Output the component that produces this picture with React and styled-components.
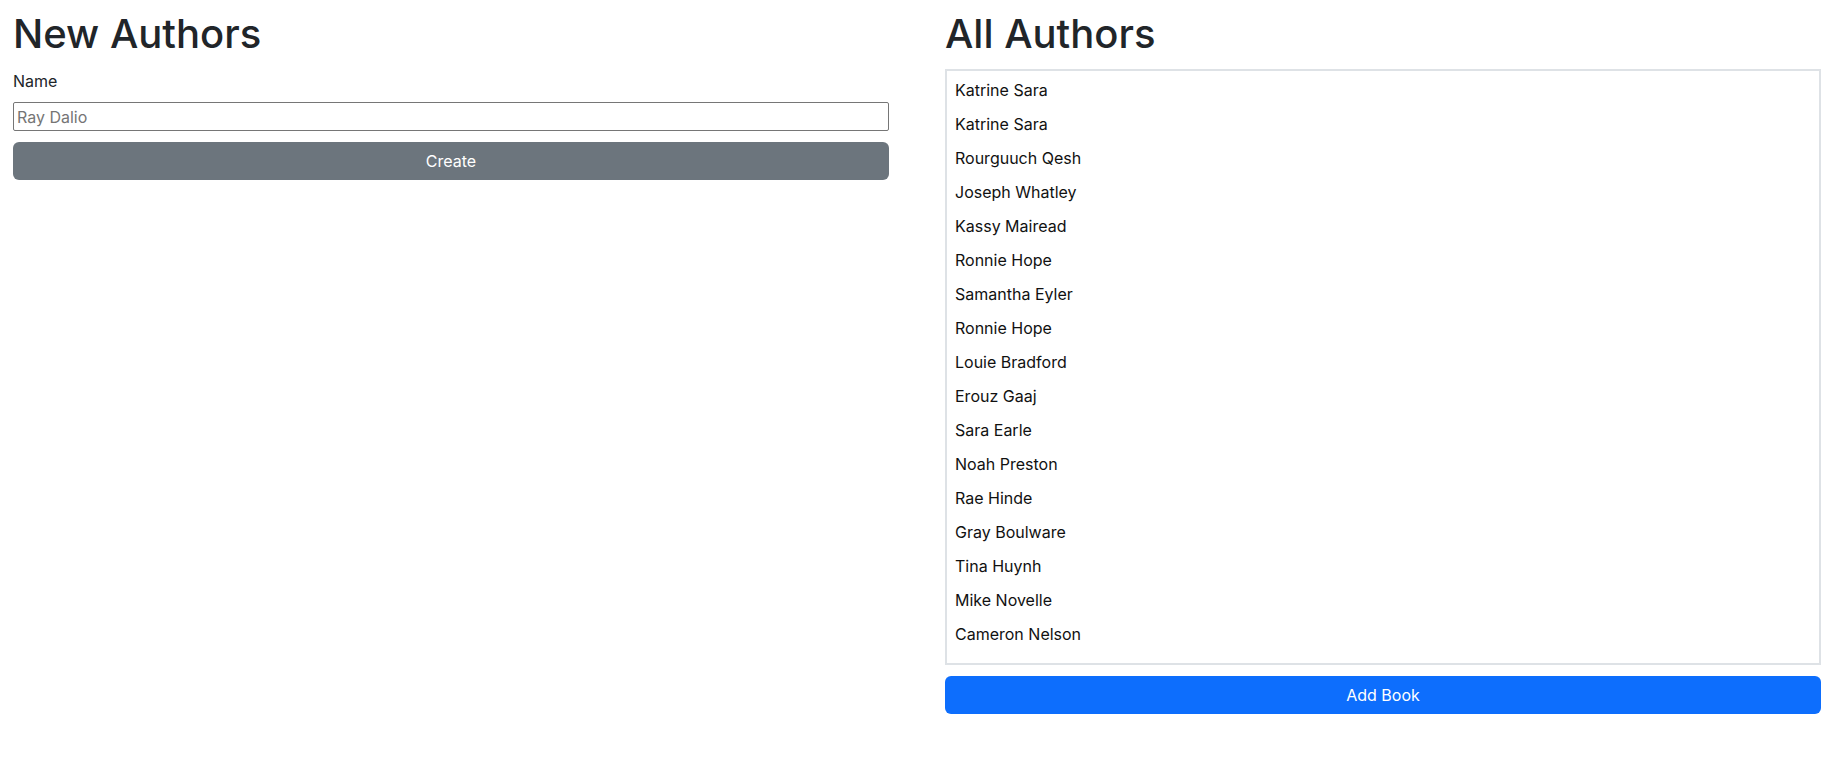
import React from 'react';
import styled, { createGlobalStyle } from 'styled-components';


const GlobalStyle = createGlobalStyle`
	html, body {
		margin: 0;
		padding: 0;
		background: #fff;
	}
	body {
		font-family: Inter, "Liberation Sans", sans-serif;
		font-size: 16px;
		line-height: 1.5;
		color: #212529;
	}
`;

const Page = styled.div`
	display: flex;
	gap: 56px;
	padding: 10px 20px 0 13px;
`;

const Column = styled.section`
	flex: 1;
	min-width: 0;
	display: flex;
	flex-direction: column;
`;

const Title = styled.h1`
	margin: 0 0 11px;
	font-size: 40px;
	font-weight: 500;
	line-height: 48px;
	color: #212529;
`;

const Label = styled.label`
	display: block;
	font-size: 16px;
	line-height: 24px;
	margin-bottom: 9px;
`;

const TextInput = styled.input`
	box-sizing: border-box;
	width: 100%;
	height: 29px;
	margin: 0;
	padding: 1px 3px;
	border: 1px solid #767676;
	border-radius: 2px;
	font-family: Inter, "Liberation Sans", sans-serif;
	font-size: 16px;
	color: #212529;
	outline: none;

	&::placeholder {
		color: #757575;
	}
`;

const Button = styled.button`
	box-sizing: border-box;
	width: 100%;
	height: 38px;
	margin-top: 11px;
	border: none;
	border-radius: 6px;
	background: ${props => props.variant === "primary" ? "#0d6efd" : "#6c757d"};
	color: #fff;
	font-family: Inter, "Liberation Sans", sans-serif;
	font-size: 16px;
	line-height: 24px;
	cursor: pointer;
`;

const AuthorList = styled.div`
	border: 2px solid #dee2e6;
	padding: 7px 8px;
`;

const AuthorItem = styled.p`
	margin: 0 0 10px;
	font-size: 16px;
	line-height: 24px;
	color: #111;
`;

const authors = [
	"Katrine Sara",
	"Katrine Sara",
	"Rourguuch Qesh",
	"Joseph Whatley",
	"Kassy Mairead",
	"Ronnie Hope",
	"Samantha Eyler",
	"Ronnie Hope",
	"Louie Bradford",
	"Erouz Gaaj",
	"Sara Earle",
	"Noah Preston",
	"Rae Hinde",
	"Gray Boulware",
	"Tina Huynh",
	"Mike Novelle",
	"Cameron Nelson"
];

export default function App() {
	return (
		<>
			<GlobalStyle/>
			<Page>
				<Column>
					<Title>New Authors</Title>
					<Label htmlFor="author-name">Name</Label>
					<TextInput id="author-name" type="text" placeholder="Ray Dalio"/>
					<Button>Create</Button>
				</Column>
				<Column>
					<Title>All Authors</Title>
					<AuthorList>
						{authors.map((name, index) => <AuthorItem key={index}>{name}</AuthorItem>)}
					</AuthorList>
					<Button variant="primary">Add Book</Button>
				</Column>
			</Page>
		</>
	);
}
